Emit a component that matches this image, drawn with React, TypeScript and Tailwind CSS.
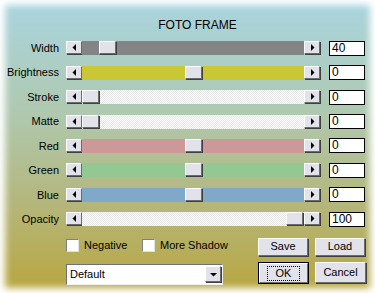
import React from 'react';

interface SliderRowProps {
  label: string;
  value: string;
  offset: number;
  track: string;
}

const dither = 'bg-[repeating-conic-gradient(#ffffff_0_25%,#e4e4e4_0_50%)] bg-[length:2px_2px]';

const rows: SliderRowProps[] = [
  { label: 'Width', value: '40', offset: 17, track: 'bg-[#848484]' },
  { label: 'Brightness', value: '0', offset: 103, track: 'bg-[#c9c733]' },
  { label: 'Stroke', value: '0', offset: 0, track: dither },
  { label: 'Matte', value: '0', offset: 0, track: dither },
  { label: 'Red', value: '0', offset: 103, track: 'bg-[#cc9898]' },
  { label: 'Green', value: '0', offset: 103, track: 'bg-[#93c893]' },
  { label: 'Blue', value: '0', offset: 103, track: 'bg-[#80a8c8]' },
  { label: 'Opacity', value: '100', offset: 204, track: dither },
];

const raised = 'bg-[#e2e2ea] border border-t-white border-l-white border-r-[#6b6b6b] border-b-[#6b6b6b] shadow-[1px_1px_0_#404040]';

const Arrow: React.FC<{ dir: 'left' | 'right' | 'down' }> = ({ dir }) => (
  <svg width="5" height="7" viewBox="0 0 5 7" className={dir === 'down' ? 'rotate-90' : ''}>
    {dir === 'left' ? <polygon points="4,0 4,7 0.5,3.5" fill="#000" /> : <polygon points="1,0 1,7 4.5,3.5" fill="#000" />}
  </svg>
);

const SliderRow: React.FC<SliderRowProps> = ({ label, value, offset, track }) => (
  <div className="flex items-center h-[24.45px]">
    <div className="w-[60px] text-right pr-[1px]">{label}</div>
    <div className="ml-[6px] flex h-[14px] w-[254px]">
      <div className={`w-[16px] h-[13px] flex items-center justify-center ${raised}`}>
        <Arrow dir="left" />
      </div>
      <div className={`flex-1 h-[14px] ${track}`}>
        <div className={`h-[13px] w-[17px] ${raised}`} style={{ marginLeft: offset }} />
      </div>
      <div className={`w-[16px] h-[13px] flex items-center justify-center ${raised}`}>
        <Arrow dir="right" />
      </div>
    </div>
    <div className="ml-[9px] w-[36px] h-[15px] bg-white border border-black leading-[13px] pl-[2px] text-[12px]">{value}</div>
  </div>
);

const Button: React.FC<{ label: string; focused?: boolean }> = ({ label, focused }) =>
  focused ? (
    <div className="w-[51px] h-[22px] border border-black">
      <div className={`w-full h-full flex items-center justify-center ${raised} shadow-none`}>
        <div className="px-[8px] border border-dotted border-black leading-[13px]">{label}</div>
      </div>
    </div>
  ) : (
    <div className={`w-[50px] h-[18px] flex items-center justify-center ${raised}`}>{label}</div>
  );

const Checkbox: React.FC<{ label: string; className?: string }> = ({ label, className }) => (
  <div className={`flex items-center shrink-0 ${className ?? ''}`}>
    <div className="w-[13px] h-[13px] bg-white border border-t-[#808080] border-l-[#808080] border-r-[#e0e0e0] border-b-[#e0e0e0]" />
    <span className="ml-[5px] whitespace-nowrap">{label}</span>
  </div>
);

export default function App() {
  return (
    <div className="w-[375px] h-[293px] bg-white">
      <div className="w-full h-full bg-[linear-gradient(180deg,#a9d5e0_0%,#afc9b0_38%,#b4b67a_70%,#b8a63e_100%)] shadow-[inset_0_0_7px_5px_#ffffff] text-[11px] text-black font-['Liberation_Sans',Arial,sans-serif]">
        <div className="pt-[18px] text-center pl-[20px] leading-[14px] text-[12px]">FOTO FRAME</div>
        <div className="mt-[4px]">
          {rows.map(r => (
            <SliderRow key={r.label} {...r} />
          ))}
        </div>
        <div className="flex mt-[6px] ml-[66px]">
          <div className="flex flex-col w-[157px] shrink-0">
            <div className="flex h-[25px] items-center mt-[-5px]">
              <Checkbox label="Negative" className="w-[76px]" />
              <Checkbox label="More Shadow" />
            </div>
            <div className="mt-[6px] w-[157px] h-[21px] bg-white border border-t-[#707070] border-l-[#707070] border-r-[#f0f0f0] border-b-[#f0f0f0] flex items-center">
              <span className="pl-[3px] flex-1">Default</span>
              <div className={`w-[16px] h-[16px] mr-[1px] flex items-center justify-center ${raised}`}>
                <Arrow dir="down" />
              </div>
            </div>
          </div>
          <div className="ml-[35px] grid grid-cols-[50px_50px] gap-x-[7px] gap-y-[6px] items-start">
            <Button label="Save" />
            <Button label="Load" />
            <Button label="OK" focused />
            <div className={`w-[51px] h-[21px] flex items-center justify-center ${raised}`}>Cancel</div>
          </div>
        </div>
      </div>
    </div>
  );
}
